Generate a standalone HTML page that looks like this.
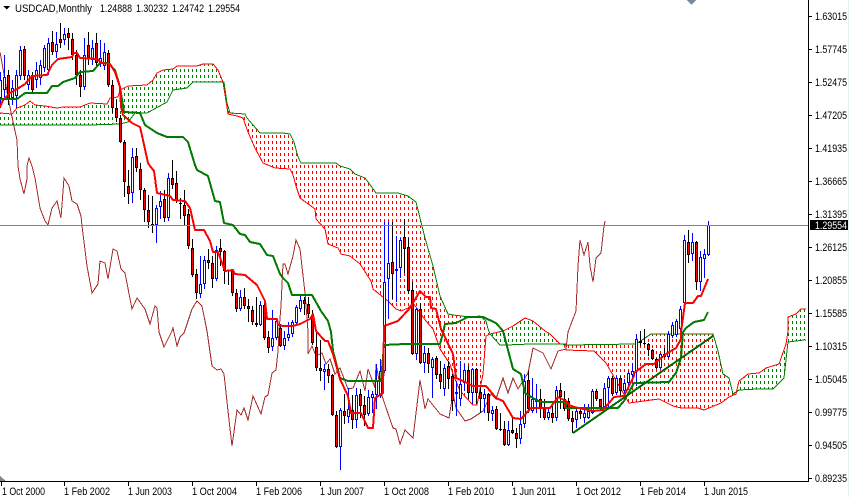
<!DOCTYPE html>
<html><head><meta charset="utf-8"><title>USDCAD,Monthly</title>
<style>
html,body{margin:0;padding:0;background:#fff;width:849px;height:497px;overflow:hidden}
svg{display:block}
text{font-family:"Liberation Sans",sans-serif;font-size:11px;fill:#000}
</style></head><body>
<svg width="849" height="497" viewBox="0 0 849 497" xmlns="http://www.w3.org/2000/svg">
<defs>
<clipPath id="c1"><path shape-rendering="crispEdges" d="M0 113L12 114 17 108 25 105 30 101 35 105 45 106 57 108 63 107 80 107 90 103 107 104 110 98 118 97 120 90 128 86 147 85 153 80 157 73 163 70 173 69 177 66 197 66 203 64 213 64 218 70 223 82 222 82 193 82 187 88 173 90 167 102 147 113 135 113 128 122 120 124 90 125 0 125Z"/></clipPath>
<clipPath id="c2"><path shape-rendering="crispEdges" d="M223 82L227 107 228 114 237 116 243 118 248 132 255 148 263 163 275 168 290 169 293 175 296 186 300 198 311 206 315 209 316 219 325 229 328 244 338 248 341 254 350 256 360 264 371 281 373 289 389 302 396 309 401 311 408 308 413 303 426 321 433 329 440 349 450 364 453 374 460 391 473 405 477 405 483 374 486 336 490 334 488 329 486 321 480 316 470 317 453 315 448 314 440 296 433 266 425 238 420 218 416 202 408 196 398 193 376 193 371 186 365 178 355 174 350 169 340 166 336 163 301 163 298 157 294 142 290 134 283 133 260 133 253 125 247 118 245 114 230 113 227 103Z"/></clipPath>
<clipPath id="c3"><path shape-rendering="crispEdges" d="M490 334L503 331 513 326 525 318 533 321 545 331 550 334 560 344 530 344 506 345 500 345Z"/></clipPath>
<clipPath id="c4"><path shape-rendering="crispEdges" d="M562 344L566 350 594 351 606 363 629 403 659 399 673 406 681 408 698 408 704 410 721 403 729 397 736 394 733 394 729 378 723 374 718 351 713 334 651 334 636 344 566 345Z"/></clipPath>
<clipPath id="c5"><path shape-rendering="crispEdges" d="M736 394L739 381 748 374 759 373 766 368 779 364 786 344 788 331 788 317 796 314 801 309 806 309 806 340 788 342 784 378 773 389 739 390Z"/></clipPath>
<path id="cols" fill="none" stroke-width="1" stroke-dasharray="3 3" shape-rendering="crispEdges" d="M.5 63v430m4-430v430m4-430v430m4-430v430m4-430v430m4-430v430m4-430v430m4-430v430m4-430v430m4-430v430
m4-430v430m4-430v430m4-430v430m4-430v430m4-430v430m4-430v430m4-430v430m4-430v430m4-430v430m4-430v430
m4-430v430m4-430v430m4-430v430m4-430v430m4-430v430m4-430v430m4-430v430m4-430v430m4-430v430m4-430v430
m4-430v430m4-430v430m4-430v430m4-430v430m4-430v430m4-430v430m4-430v430m4-430v430m4-430v430m4-430v430
m4-430v430m4-430v430m4-430v430m4-430v430m4-430v430m4-430v430m4-430v430m4-430v430m4-430v430m4-430v430
m4-430v430m4-430v430m4-430v430m4-430v430m4-430v430m4-430v430m4-430v430m4-430v430m4-430v430m4-430v430
m4-430v430m4-430v430m4-430v430m4-430v430m4-430v430m4-430v430m4-430v430m4-430v430m4-430v430m4-430v430
m4-430v430m4-430v430m4-430v430m4-430v430m4-430v430m4-430v430m4-430v430m4-430v430m4-430v430m4-430v430
m4-430v430m4-430v430m4-430v430m4-430v430m4-430v430m4-430v430m4-430v430m4-430v430m4-430v430m4-430v430
m4-430v430m4-430v430m4-430v430m4-430v430m4-430v430m4-430v430m4-430v430m4-430v430m4-430v430m4-430v430
m4-430v430m4-430v430m4-430v430m4-430v430m4-430v430m4-430v430m4-430v430m4-430v430m4-430v430m4-430v430
m4-430v430m4-430v430m4-430v430m4-430v430m4-430v430m4-430v430m4-430v430m4-430v430m4-430v430m4-430v430
m4-430v430m4-430v430m4-430v430m4-430v430m4-430v430m4-430v430m4-430v430m4-430v430m4-430v430m4-430v430
m4-430v430m4-430v430m4-430v430m4-430v430m4-430v430m4-430v430m4-430v430m4-430v430m4-430v430m4-430v430
m4-430v430m4-430v430m4-430v430m4-430v430m4-430v430m4-430v430m4-430v430m4-430v430m4-430v430m4-430v430
m4-430v430m4-430v430m4-430v430m4-430v430m4-430v430m4-430v430m4-430v430m4-430v430m4-430v430m4-430v430
m4-430v430m4-430v430m4-430v430m4-430v430m4-430v430m4-430v430m4-430v430m4-430v430m4-430v430m4-430v430
m4-430v430m4-430v430m4-430v430m4-430v430m4-430v430m4-430v430m4-430v430m4-430v430m4-430v430m4-430v430
m4-430v430m4-430v430m4-430v430m4-430v430m4-430v430m4-430v430m4-430v430m4-430v430m4-430v430m4-430v430
m4-430v430m4-430v430m4-430v430m4-430v430m4-430v430m4-430v430m4-430v430m4-430v430m4-430v430m4-430v430
m4-430v430m4-430v430m4-430v430"/>
</defs>
<rect width="849" height="497" fill="#fff"/>
<rect x="848" y="0" width="1" height="497" fill="#e3f1f1"/>

<g shape-rendering="crispEdges">
<!-- cloud fills -->
<g clip-path="url(#c1)"><use href="#cols" stroke="#008000"/></g>
<g clip-path="url(#c2)"><use href="#cols" stroke="#f00"/></g>
<g clip-path="url(#c3)"><use href="#cols" stroke="#008000"/></g>
<g clip-path="url(#c4)"><use href="#cols" stroke="#f00"/></g>
<g clip-path="url(#c5)"><use href="#cols" stroke="#008000"/></g>

<!-- span lines -->
<path fill="none" stroke="#f00" stroke-width="1" d="M0 113L12 114 17 108 25 105 30 101 35 105 45 106 57 108 63 107 80 107 90 103 107 104 110 98 118 97 120 90 128 86 147 85 153 80 157 73 163 70 173 69 177 66 197 66 203 64 213 64 218 70 223 82 227 107 228 114 237 116 243 118 248 132 255 148 263 163 275 168 290 169 293 175 296 186 300 198 311 206 315 209 316 219 325 229 328 244 338 248 341 254 350 256 360 264 371 281 373 289 389 302 396 309 401 311 408 308 413 303 426 321 433 329 440 349 450 364 453 374 460 391 473 405 477 405 483 374 486 336 490 334 503 331 513 326 525 318 533 321 545 331 550 334 560 344 566 344 566 350 594 351 606 363 629 403 659 399 673 406 681 408 698 408 704 410 721 403 729 397 736 394 739 381 748 374 759 373 766 368 779 364 786 344 788 331 788 317 796 314 801 309 806 309"/>
<path fill="none" stroke="#008000" stroke-width="1" d="M0 125L90 125 120 124 128 122 135 113 147 113 167 102 173 90 187 88 193 82 222 82 224 82 227 103 230 113 245 114 247 118 253 125 260 133 283 133 290 134 294 142 298 157 301 163 336 163 340 166 350 169 355 174 365 178 371 186 376 193 398 193 408 196 416 202 420 218 425 238 433 266 440 296 448 314 453 315 470 317 480 316 486 321 488 329 490 334 500 345 506 345 530 344 562 344 566 345 636 344 651 334 713 334 718 351 723 374 729 378 733 394 739 390 758 389 773 389 784 378 788 342 804 340 806 340"/>

<!-- chikou -->
<path fill="none" stroke="#a52a2a" stroke-width="1" d="M0 52L2 63 5 80 8 97 12 117 17 140 18 166 20 179 24 194 27 179 27 166 29 158 32 166 35 178 40 208 45 221 48 225 52 208 57 201 61 218 64 178 69 186 72 201 77 204 81 216 82 226 87 266 92 293 98 284 100 261 105 263 108 279 113 249 117 251 121 269 125 273 132 309 137 298 145 309 150 324 155 306 157 308 159 332 164 347 172 331 173 328 177 346 180 337 184 333 192 309 197 301 202 306 207 331 212 366 217 370 221 369 224 374 228 411 232 446 237 410 241 415 244 408 248 420 253 396 261 414 265 397 268 395 272 373 276 370 278 351 279 331 281 306 283 264 285 264 288 274 293 256 296 240 300 249 305 293 308 331 308 354 312 346 316 356 322 353 326 364 330 359 335 374 340 368 348 389 353 388 360 371 365 391 368 369 375 388 376 364 382 396 393 428 396 429 400 444 405 430 413 438 420 380 425 409 428 399 440 414 449 418 453 393 456 408 465 421 471 419 483 411 491 394 496 399 503 378 508 393 513 378 518 389 528 373 533 348 543 353 551 369 558 351 566 349 568 332 576 311 578 266 580 240 584 255 588 242 590 266 593 282 596 258 601 253 604 226 605 221"/>

<g transform="translate(0.5,0)" fill="none">
<!-- bull wicks -->
<path stroke="#00f" stroke-width="1" d="M0 72V108M4 55V100M12 80V105M16 70V108M20 46V80M28 70V90M36 62V88M40 60V85M44 45V72M48 38V75M56 32V58M64 28V45M84 38V90M92 40V65M100 40V67M104 43V70M132 148V203M156 205V243M160 191V219M168 173V221M200 256V298M204 256V289M216 246V281M240 290V311M260 301V326M272 310V351M276 318V340M284 331V350M288 322V341M292 320V337M296 305V325M300 294V312M324 364V390M340 408V470M348 388V423M356 388V428M368 390V416M372 391V413M376 364V409M380 359V398M384 222V373M388 222V319M396 236V302M400 238V278M416 308V360M424 346V373M432 357V398M444 364V396M456 381V416M460 361V406M464 364V391M472 368V404M484 389V413M492 406V421M508 421V446M520 411V444M524 374V428M532 378V413M536 384V413M548 408V420M556 386V421M576 409V428M584 404V423M588 404V419M592 389V414M604 383V409M608 376V408M616 376V395M624 379V398M628 371V386M632 363V381M636 334V386M660 353V369M668 331V358M672 322V338M676 319V337M680 306V332M684 235V308M692 233V261M700 251V291M704 249V278M708 221V256"/>
<!-- bull bodies -->
<path stroke="#00f" stroke-width="3" d="M0 80V98M4 77V90M12 88V98M16 75V96M20 50V76M28 75V85M36 70V80M40 65V78M44 48V68M48 43V70M56 44V52M64 34V40M84 55V87M92 48V60M100 58V64M104 52V66M132 157V193M156 208V225M160 201V207M168 178V218M200 284V294M204 260V284M216 250V279M240 297V309M260 305V325M272 338V347M276 321V338M284 338V346M288 334V338M292 322V334M296 307V323M300 300V309M324 369V372M340 410V447M348 409V417M356 395V420M368 397V414M372 394V398M376 381V395M380 371V396M384 282V371M388 263V279M396 269V271M400 240V268M416 309V354M424 353V363M432 359V368M444 368V389M456 392V394M460 384V399M464 370V383M472 369V393M484 394V399M492 410V414M508 430V445M520 424V439M524 381V424M532 399V411M536 399V402M548 412V418M556 390V418M576 411V420M584 413V418M588 411V418M592 391V413M604 388V407M608 378V388M616 378V393M624 383V391M628 373V383M632 371V375M636 339V371M660 354V368M668 334V357M672 325V336M676 321V335M680 309V329M684 240V303M692 242V254M700 257V282M704 254V259M708 225V255"/>
<path stroke="#fff" stroke-width="1" d="M0 81V97M4 78V89M12 89V97M16 76V95M20 51V75M28 76V84M36 71V79M40 66V77M44 49V67M48 44V69M56 45V51M64 35V39M84 56V86M92 49V59M100 59V63M104 53V65M132 158V192M156 209V224M160 202V206M168 179V217M200 285V293M204 261V283M216 251V278M240 298V308M260 306V324M272 339V346M276 322V337M284 339V345M288 335V337M292 323V333M296 308V322M300 301V308M324 370V371M340 411V446M348 410V416M356 396V419M368 398V413M372 395V397M376 382V394M380 372V395M384 283V370M388 264V278M400 241V267M416 310V353M424 354V362M432 360V367M444 369V388M460 385V398M464 371V382M472 370V392M484 395V398M492 411V413M508 431V444M520 425V438M524 382V423M532 400V410M536 400V401M548 413V417M556 391V417M576 412V419M584 414V417M588 412V417M592 392V412M604 389V406M608 379V387M616 379V392M624 384V390M628 374V382M632 372V374M636 340V370M660 355V367M668 335V356M672 326V335M676 322V334M680 310V328M684 241V302M692 243V253M700 258V281M704 255V258M708 226V254"/>
<!-- bear wicks -->
<path stroke="#000" stroke-width="1" d="M8 70V105M24 46V80M32 72V92M52 31V55M60 23V48M68 28V50M72 33V60M76 50V85M80 70V97M88 32V65M96 33V67M108 50V87M112 80V113M116 100V122M120 115V143M124 140V197M128 170V204M136 148V172M140 163V200M144 188V222M148 195V228M152 196V233M164 190V222M172 160V189M176 171V203M180 198V219M184 190V225M188 209V249M192 239V277M196 269V299M208 249V269M212 256V288M220 239V266M224 250V284M228 270V285M232 269V296M236 289V312M244 288V309M248 299V322M252 306V325M256 297V327M264 299V340M268 331V353M280 324V347M304 297V315M308 297V318M312 310V345M316 331V371M320 340V381M328 364V383M332 374V416M336 411V448M344 394V424M352 395V429M360 389V418M364 396V426M392 222V299M404 219V273M408 238V294M412 282V355M420 303V364M428 348V373M436 356V379M440 361V389M448 361V389M452 374V411M468 366V399M476 368V404M480 386V413M488 393V421M496 406V430M500 413V431M504 421V446M512 416V434M516 428V448M528 371V413M540 389V418M544 399V420M552 401V423M560 383V409M564 391V411M568 398V421M572 411V433M580 409V419M596 389V401M600 399V411M612 376V396M620 376V397M640 331V346M644 329V345M648 343V356M652 349V360M656 358V369M664 348V358M688 230V263M696 241V290"/>
<!-- bear bodies -->
<path stroke="#000" stroke-width="3" d="M8 75V100M24 49V76M32 75V90M52 42V52M60 39V43M68 33V38M72 39V55M76 55V75M80 75V87M88 45V58M96 43V63M108 53V85M112 85V108M116 108V118M120 118V142M124 142V182M128 186V194M136 156V168M140 169V190M144 190V210M148 210V222M152 224V226M164 199V218M172 178V185M176 183V201M180 203V204M184 205V216M188 214V246M192 248V275M196 274V293M208 260V263M212 263V279M220 248V252M224 251V271M228 270V271M232 271V293M236 293V309M244 297V306M248 306V309M252 310V322M256 323V325M264 305V338M268 337V348M280 328V346M304 300V304M308 304V314M312 315V343M316 347V368M320 368V371M328 369V376M332 375V415M336 415V447M344 411V416M352 410V420M360 394V406M364 405V415M392 262V274M404 237V249M408 247V291M412 290V354M420 309V363M428 353V364M436 358V375M440 374V382M448 366V379M452 376V401M468 370V393M476 369V393M480 392V399M488 394V413M496 409V429M500 429V430M504 429V445M512 430V433M516 433V439M528 380V409M540 399V409M544 409V418M552 413V418M560 390V397M564 399V409M568 401V419M572 418V422M580 411V414M596 391V399M600 399V407M612 378V394M620 378V391M640 341V343M644 343V344M648 344V350M652 350V359M656 359V368M664 354V357M688 242V255M696 242V282"/>
<path stroke="#f00" stroke-width="1" d="M8 76V99M24 50V75M32 76V89M52 43V51M60 40V42M68 34V37M72 40V54M76 56V74M80 76V86M88 46V57M96 44V62M108 54V84M112 86V107M116 109V117M120 119V141M124 143V181M128 187V193M136 157V167M140 170V189M144 191V209M148 211V221M164 200V217M172 179V184M176 184V200M184 206V215M188 215V245M192 249V274M196 275V292M208 261V262M212 264V278M220 249V251M224 252V270M232 272V292M236 294V308M244 298V305M248 307V308M252 311V321M264 306V337M268 338V347M280 329V345M304 301V303M308 305V313M312 316V342M316 348V367M320 369V370M328 370V375M332 376V414M336 416V446M344 412V415M352 411V419M360 395V405M364 406V414M392 263V273M404 238V248M408 248V290M412 291V353M420 310V362M428 354V363M436 359V374M440 375V381M448 367V378M452 377V400M468 371V392M476 370V392M480 393V398M488 395V412M496 410V428M504 430V444M512 431V432M516 434V438M528 381V408M540 400V408M544 410V417M552 414V417M560 391V396M564 400V408M568 402V418M572 419V421M580 412V413M596 392V398M600 400V406M612 379V393M620 379V390M648 345V349M652 351V358M656 360V367M664 355V356M688 243V254M696 243V281"/>
</g>

<!-- gray price line -->
<rect x="0" y="225" width="808" height="1" fill="#778899"/>

<!-- kijun -->
<path fill="none" stroke="#007a00" stroke-width="2" stroke-linejoin="round" d="M0 99L17 99 25 93 47 93 52 86 58 86 63 82 75 78 80 72 93 71 100 63 108 63 115 70 120 87 124 112 140 113 145 125 157 133 167 137 183 137 188 142 195 165 197 170 208 176 215 201 220 202 224 223 233 225 240 234 245 235 250 242 260 244 267 255 273 256 280 274 283 278 288 283 292 295 312 295 321 311 328 321 331 332 333 351 340 378 348 381 381 381 384 345 405 344 440 344 443 333 445 324 456 323 468 317 483 317 496 323 503 331 513 369 521 374 525 393 533 398 540 402 566 402 566 408 618 408 624 401 634 383 669 382 676 373 681 358 683 332 686 328 694 322 704 320 708 312"/>
<!-- tenkan -->
<path fill="none" stroke="#f00" stroke-width="2" stroke-linejoin="round" d="M0 107L3 100 10 93 17 89 25 84 32 76 47 75 52 65 58 59 72 57 74 53 77 53 80 58 97 59 102 63 110 64 115 72 120 87 121 107 123 115 132 123 140 127 143 140 148 163 150 166 154 171 157 193 170 196 173 200 185 201 190 208 195 230 204 230 210 241 213 252 218 252 225 271 233 270 235 274 245 275 257 285 265 301 267 319 277 319 278 325 283 326 293 326 300 324 310 319 313 314 316 331 325 341 328 341 333 354 340 379 348 396 351 413 361 413 368 428 373 428 375 398 383 393 384 326 398 321 410 308 420 291 426 297 430 297 431 308 436 309 441 329 453 354 456 378 463 381 473 386 486 386 496 398 503 401 513 418 521 419 531 408 550 408 558 397 566 401 569 405 574 407 593 411 603 410 614 397 624 396 634 376 634 373 646 364 654 364 666 354 676 348 681 339 681 332 685 303 693 303 698 296 701 296 708 279"/>
<!-- trend line -->
<path fill="none" stroke="#006a00" stroke-width="2" d="M573 433L713 336"/>

<!-- axes -->
<rect x="808" y="0" width="1" height="482" fill="#000"/>
<rect x="0" y="481" width="809" height="1" fill="#000"/>
<path stroke="#000" stroke-width="1" fill="none" d="M808 16.5H812M808 49.5H812M808 82.5H812M808 115.5H812M808 148.5H812M808 181.5H812M808 214.5H812M808 247.5H812M808 280.5H812M808 313.5H812M808 346.5H812M808 379.5H812M808 412.5H812M808 445.5H812M808 478.5H812M1.5 481V486M64.5 481V486M128.5 481V486M192.5 481V486M256.5 481V486M320.5 481V486M384.5 481V486M448.5 481V486M512.5 481V486M576.5 481V486M640.5 481V486M704.5 481V486"/>
<rect x="810" y="220" width="38" height="10" fill="#000"/>
<path fill="#778899" d="M687 0H696L691.5 5ZM0 476L6 481H0Z"/>
<path fill="#000" d="M3 6H10L6.5 9.5Z"/>
</g>

<!-- header -->
<text x="15" y="12" textLength="77" lengthAdjust="spacingAndGlyphs">USDCAD,Monthly</text>
<text x="100" y="12" textLength="32" lengthAdjust="spacingAndGlyphs">1.24888</text>
<text x="136" y="12" textLength="32" lengthAdjust="spacingAndGlyphs">1.30232</text>
<text x="172" y="12" textLength="32" lengthAdjust="spacingAndGlyphs">1.24742</text>
<text x="208" y="12" textLength="32" lengthAdjust="spacingAndGlyphs">1.29554</text>

<!-- price axis -->
<text x="815" y="20" textLength="32" lengthAdjust="spacingAndGlyphs">1.63015</text>
<text x="815" y="53" textLength="32" lengthAdjust="spacingAndGlyphs">1.57745</text>
<text x="815" y="86" textLength="32" lengthAdjust="spacingAndGlyphs">1.52475</text>
<text x="815" y="119" textLength="32" lengthAdjust="spacingAndGlyphs">1.47205</text>
<text x="815" y="152" textLength="32" lengthAdjust="spacingAndGlyphs">1.41935</text>
<text x="815" y="185" textLength="32" lengthAdjust="spacingAndGlyphs">1.36665</text>
<text x="815" y="218" textLength="32" lengthAdjust="spacingAndGlyphs">1.31395</text>
<text x="815" y="229" textLength="32" lengthAdjust="spacingAndGlyphs" style="fill:#fff">1.29554</text>
<text x="815" y="251" textLength="32" lengthAdjust="spacingAndGlyphs">1.26125</text>
<text x="815" y="284" textLength="32" lengthAdjust="spacingAndGlyphs">1.20855</text>
<text x="815" y="317" textLength="32" lengthAdjust="spacingAndGlyphs">1.15585</text>
<text x="815" y="350" textLength="32" lengthAdjust="spacingAndGlyphs">1.10315</text>
<text x="815" y="383" textLength="32" lengthAdjust="spacingAndGlyphs">1.05045</text>
<text x="815" y="416" textLength="32" lengthAdjust="spacingAndGlyphs">0.99775</text>
<text x="815" y="449" textLength="32" lengthAdjust="spacingAndGlyphs">0.94505</text>
<text x="815" y="482" textLength="32" lengthAdjust="spacingAndGlyphs">0.89235</text>

<!-- time axis -->
<text x="2" y="495" textLength="43" lengthAdjust="spacingAndGlyphs">1 Oct 2000</text>
<text x="64" y="495" textLength="46" lengthAdjust="spacingAndGlyphs">1 Feb 2002</text>
<text x="128" y="495" textLength="44" lengthAdjust="spacingAndGlyphs">1 Jun 2003</text>
<text x="192" y="495" textLength="45" lengthAdjust="spacingAndGlyphs">1 Oct 2004</text>
<text x="256" y="495" textLength="46" lengthAdjust="spacingAndGlyphs">1 Feb 2006</text>
<text x="320" y="495" textLength="44" lengthAdjust="spacingAndGlyphs">1 Jun 2007</text>
<text x="384" y="495" textLength="45" lengthAdjust="spacingAndGlyphs">1 Oct 2008</text>
<text x="448" y="495" textLength="46" lengthAdjust="spacingAndGlyphs">1 Feb 2010</text>
<text x="512" y="495" textLength="44" lengthAdjust="spacingAndGlyphs">1 Jun 2011</text>
<text x="576" y="495" textLength="45" lengthAdjust="spacingAndGlyphs">1 Oct 2012</text>
<text x="640" y="495" textLength="46" lengthAdjust="spacingAndGlyphs">1 Feb 2014</text>
<text x="704" y="495" textLength="44" lengthAdjust="spacingAndGlyphs">1 Jun 2015</text>
</svg>
</body></html>
